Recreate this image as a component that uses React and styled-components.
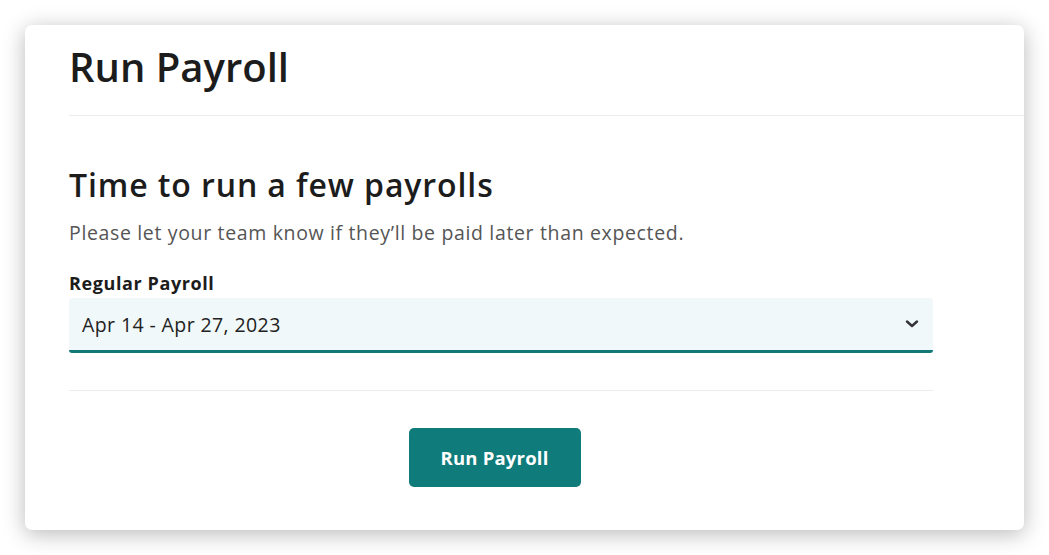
import React from "react";
import styled, { createGlobalStyle } from "styled-components";

const GlobalStyle = createGlobalStyle`
  html, body {
    margin: 0;
    padding: 0;
    background: #ffffff;
  }
  body {
    font-family: "Open Sans", "Liberation Sans", sans-serif;
    color: #1c1c1c;
  }
`;

const Page = styled.div`
  width: 1049px;
  height: 555px;
  box-sizing: border-box;
  padding: 25px;
  overflow: hidden;
`;

const Card = styled.div`
  width: 999px;
  height: 505px;
  background: #ffffff;
  border-radius: 7px;
  box-shadow: 0 4px 22px rgba(0, 0, 0, 0.28);
  padding-left: 44px;
  box-sizing: border-box;
`;

const Header = styled.div`
  border-bottom: 1px solid #ececec;
  padding-top: 16px;
  height: 91px;
  box-sizing: border-box;
  h1 {
    margin: 0;
    font-size: 40px;
    line-height: 52px;
    font-weight: 600;
    letter-spacing: 0;
  }
`;

const Body = styled.div`
  width: 864px;
  padding-top: 49px;
`;

const Title = styled.h2`
  margin: 0;
  font-size: 32px;
  line-height: 40px;
  font-weight: 600;
  letter-spacing: 0.9px;
`;

const Lead = styled.p`
  margin: 15px 0 0;
  font-size: 19.5px;
  line-height: 26px;
  color: #555555;
  letter-spacing: 0.65px;
`;

const Label = styled.label`
  display: block;
  margin-top: 25px;
  font-size: 18px;
  line-height: 24px;
  font-weight: 700;
  letter-spacing: 0.6px;
`;

const Select = styled.div`
  margin-top: 3px;
  height: 55px;
  box-sizing: border-box;
  background: #f1f8f9;
  border-radius: 4px 4px 3px 3px;
  border-bottom: 3px solid #147878;
  display: flex;
  align-items: center;
  justify-content: space-between;
  padding: 0 14px 0 13px;
  font-size: 19.5px;
  color: #222;
  letter-spacing: 0.4px;
  cursor: pointer;
`;

const Divider = styled.hr`
  margin: 37px 0 0;
  border: 0;
  border-top: 1px solid #ececec;
`;

const Actions = styled.div`
  display: flex;
  justify-content: center;
  padding-top: 37px;
  padding-right: 13px;
`;

const Button = styled.button`
  width: 172px;
  height: 59px;
  border: 0;
  border-radius: 5px;
  background: #0f7b7a;
  color: #ffffff;
  font-family: inherit;
  font-size: 18.5px;
  font-weight: 700;
  letter-spacing: 0.2px;
  cursor: pointer;
`;

const Chevron = () => (
  <svg width="14" height="10" viewBox="0 0 14 10" fill="none">
    <path
      d="M2 2.5 L7 7 L12 2.5"
      stroke="#333"
      strokeWidth="2.4"
      strokeLinecap="round"
      strokeLinejoin="round"
    />
  </svg>
);

export default function App() {
  return (
    <>
      <GlobalStyle />
      <Page>
        <Card>
          <Header>
            <h1>Run Payroll</h1>
          </Header>
          <Body>
            <Title>Time to run a few payrolls</Title>
            <Lead>Please let your team know if they’ll be paid later than expected.</Lead>
            <Label>Regular Payroll</Label>
            <Select>
              <span>Apr 14 - Apr 27, 2023</span>
              <Chevron />
            </Select>
            <Divider />
            <Actions>
              <Button>Run Payroll</Button>
            </Actions>
          </Body>
        </Card>
      </Page>
    </>
  );
}
